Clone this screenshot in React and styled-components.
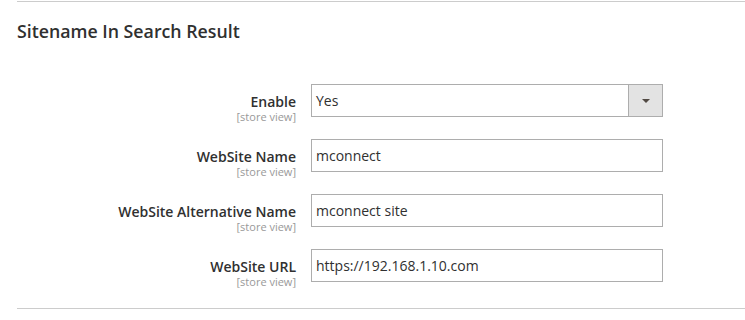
import styled, { createGlobalStyle } from "styled-components";

const GlobalStyle = createGlobalStyle`
  body {
    margin: 0;
    background: #fff;
    font-family: "Open Sans", "Noto Sans", sans-serif;
    color: #303030;
  }
`;

const Page = styled.div`
  padding: 1px 0 0 17px;
`;

const Section = styled.section`
  border-top: 1px solid #cccccc;
  border-bottom: 1px solid #cccccc;
  padding: 18px 0 26px;
`;

const Title = styled.h2`
  margin: 0 0 42px;
  font-size: 17.75px;
  line-height: 22px;
  font-weight: 600;
  color: #303030;
`;

const Form = styled.div`
  display: grid;
  grid-template-columns: 279px 352px;
  grid-auto-rows: 33px;
  column-gap: 15px;
  row-gap: 22px;
`;

const LabelCell = styled.div`
  text-align: right;
  padding-top: 9px;
`;

const Label = styled.div`
  font-size: 14px;
  line-height: 18px;
  font-weight: 600;
  color: #303030;
`;

const Scope = styled.div`
  font-size: 11px;
  line-height: 12px;
  color: #999999;
`;

const Field = styled.div`
  height: 33px;
  box-sizing: border-box;
  border: 1px solid #adadad;
  background: #fff;
  display: flex;
  align-items: center;
  font-size: 14px;
  color: #303030;
`;

const Value = styled.span`
  flex: 1;
  padding-left: 4px;
`;

const SelectButton = styled.div`
  width: 34px;
  height: 100%;
  box-sizing: border-box;
  border-left: 1px solid #adadad;
  background: #e3e3e3;
  display: flex;
  align-items: center;
  justify-content: center;

  &::after {
    content: "";
    border-left: 4px solid transparent;
    border-right: 4px solid transparent;
    border-top: 4px solid #514943;
  }
`;

const rows = [
  { label: "Enable", value: "Yes", select: true },
  { label: "WebSite Name", value: "mconnect" },
  { label: "WebSite Alternative Name", value: "mconnect site" },
  { label: "WebSite URL", value: "https://192.168.1.10.com" },
];

export default function App() {
  return (
    <Page>
      <GlobalStyle />
      <Section>
        <Title>Sitename In Search Result</Title>
        <Form>
          {rows.flatMap((row) => [
            <LabelCell key={row.label + "-l"}>
              <Label>{row.label}</Label>
              <Scope>[store view]</Scope>
            </LabelCell>,
            <Field key={row.label + "-f"}>
              <Value>{row.value}</Value>
              {row.select && <SelectButton />}
            </Field>,
          ])}
        </Form>
      </Section>
    </Page>
  );
}
